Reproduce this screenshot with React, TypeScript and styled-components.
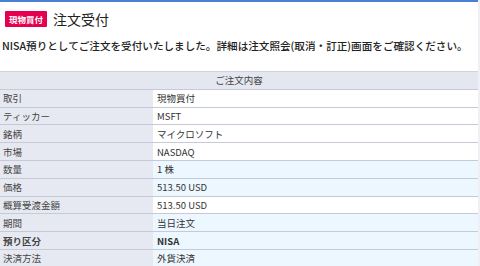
import React from 'react';
import styled, { createGlobalStyle } from 'styled-components';

const GlobalStyle = createGlobalStyle`
  html, body {
    margin: 0;
    padding: 0;
    background: #eef0f6;
  }
  body {
    font-family: "Noto Sans CJK JP", "Noto Sans", sans-serif;
    color: #333;
  }
`;

const Page = styled.div`
  width: 478px;
  height: 266px;
  background: #fff;
  border-top: 2px solid #4a80d2;
  box-sizing: border-box;
  overflow: hidden;
`;

const TitleBar = styled.div`
  display: flex;
  align-items: center;
  gap: 6px;
  padding: 8px 0 0 5px;
  height: 18px;
`;

const Badge = styled.span`
  display: inline-flex;
  align-items: center;
  justify-content: center;
  background: #e5004f;
  color: #fff;
  font-size: 8.5px;
  font-weight: 700;
  height: 16px;
  padding: 0 4px;
  border-radius: 1px;
`;

const Title = styled.h1`
  margin: 0;
  font-size: 14px;
  font-weight: 400;
  color: #222;
`;

const Message = styled.p`
  margin: 10px 0 0 2px;
  font-size: 10.6px;
  line-height: 16px;
  font-weight: 500;
  color: #222;
  white-space: nowrap;
`;

const Table = styled.div`
  margin-top: 17px;
  border-top: 1px solid #cfd3de;
`;

const HeaderRow = styled.div`
  height: 17.8px;
  box-sizing: border-box;
  border-bottom: 1px solid #c6cad7;
  background: #e4e7f0;
  display: flex;
  align-items: center;
  justify-content: center;
  font-size: 9.5px;
  color: #444;
`;

const Row = styled.div`
  display: grid;
  grid-template-columns: 153px 1fr;
  height: 17.8px;
  box-sizing: border-box;
  border-bottom: 1px solid #c6cad7;
`;

const Label = styled.div<{ $bold?: boolean }>`
  background: #e6e9f1;
  display: flex;
  align-items: center;
  padding-left: 3px;
  font-size: 9.5px;
  color: #444;
  font-weight: ${p => (p.$bold ? 700 : 400)};
`;

const Value = styled.div<{ $tint?: boolean; $bold?: boolean }>`
  background: ${p => (p.$tint ? '#edf7ff' : '#fff')};
  display: flex;
  align-items: center;
  padding-left: 4px;
  font-size: 9.5px;
  color: #333;
  font-weight: ${p => (p.$bold ? 700 : 400)};
`;

const rows = [
  { label: '取引', value: '現物買付' },
  { label: 'ティッカー', value: 'MSFT' },
  { label: '銘柄', value: 'マイクロソフト' },
  { label: '市場', value: 'NASDAQ' },
  { label: '数量', value: '1 株', tint: true },
  { label: '価格', value: '513.50 USD', tint: true },
  { label: '概算受渡金額', value: '513.50 USD' },
  { label: '期間', value: '当日注文', tint: true },
  { label: '預り区分', value: 'NISA', tint: true, bold: true },
  { label: '決済方法', value: '外貨決済', tint: true },
];

export default function App() {
  return (
    <>
      <GlobalStyle />
      <Page>
        <TitleBar>
          <Badge>現物買付</Badge>
          <Title>注文受付</Title>
        </TitleBar>
        <Message>
          NISA預りとしてご注文を受付いたしました。詳細は注文照会(取消・訂正)画面をご確認ください。
        </Message>
        <Table>
          <HeaderRow>ご注文内容</HeaderRow>
          {rows.map(r => (
            <Row key={r.label}>
              <Label $bold={r.bold}>{r.label}</Label>
              <Value $tint={r.tint} $bold={r.bold}>{r.value}</Value>
            </Row>
          ))}
        </Table>
      </Page>
    </>
  );
}
